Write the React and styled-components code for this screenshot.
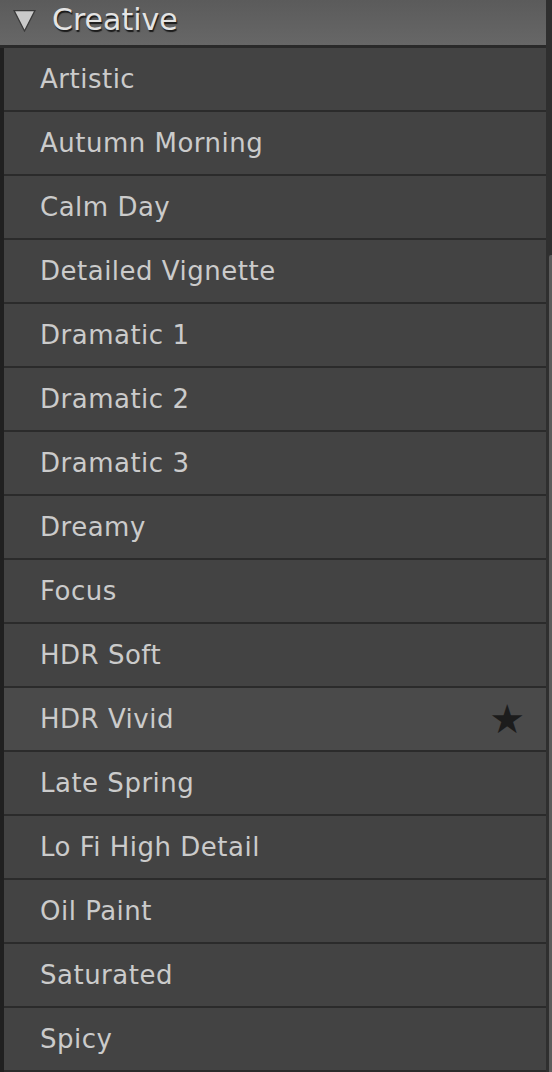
import React from "react";
import styled, { createGlobalStyle } from "styled-components";

const GlobalStyle = createGlobalStyle`
  html, body {
    margin: 0;
    padding: 0;
    background: #2c2c2c;
  }
  body {
    font-family: "DejaVu Sans", "Liberation Sans", sans-serif;
  }
`;

const presets = [
  "Artistic",
  "Autumn Morning",
  "Calm Day",
  "Detailed Vignette",
  "Dramatic 1",
  "Dramatic 2",
  "Dramatic 3",
  "Dreamy",
  "Focus",
  "HDR Soft",
  "HDR Vivid",
  "Late Spring",
  "Lo Fi High Detail",
  "Oil Paint",
  "Saturated",
  "Spicy",
];

const App = () => {
  return (
    <>
      <GlobalStyle />
      <Panel>
        <Content>
          <Header>
            <Caret viewBox="0 0 22 22">
              <path d="M1 1.5 L21 1.5 L11 21 Z" fill="#cacaca" stroke="#3a3a3a" strokeWidth="1.2" />
            </Caret>
            <Title>Creative</Title>
          </Header>
          <List>
            {presets.map((name) => (
              <Row key={name} selected={name === "HDR Vivid"}>
                <Label>{name}</Label>
                {name === "HDR Vivid" && <Star>★</Star>}
              </Row>
            ))}
          </List>
        </Content>
        <Track>
          <Thumb />
        </Track>
      </Panel>
    </>
  );
};

const Panel = styled.div`
  display: flex;
  width: 552px;
  height: 1072px;
  overflow: hidden;
`;

const Content = styled.div`
  flex: 1;
  display: flex;
  flex-direction: column;
`;

const Header = styled.div`
  height: 45px;
  display: flex;
  align-items: center;
  gap: 16px;
  padding-left: 13px;
  background: linear-gradient(#5b5b5b, #676767);
  border-bottom: 3px solid #2a2a2a;
`;

const Caret = styled.svg`
  width: 23px;
  height: 23px;
  margin-top: -4px;
`;

const Title = styled.span`
  font-size: 30px;
  color: #e4e4e4;
  text-shadow: 1px 2px 1px #1a1a1a;
  margin-top: -7px;
`;

const List = styled.div`
  border-left: 4px solid #202020;
  display: flex;
  flex-direction: column;
`;

const Row = styled.div`
  height: 62px;
  display: flex;
  align-items: center;
  justify-content: space-between;
  padding: 0 21px 0 36px;
  background: ${({ selected }) => (selected ? "#4a4a4a" : "#434343")};
  border-bottom: 2px solid #2b2b2b;
`;

const Label = styled.span`
  font-size: 26px;
  letter-spacing: 0.5px;
  color: #cbcbcb;
`;

const Star = styled.span`
  font-size: 40px;
  color: #1c1c1c;
  line-height: 1;
`;

const Track = styled.div`
  width: 6px;
  background: #2f2f2f;
  display: flex;
  flex-direction: column;
  padding-top: 255px;
  align-items: flex-end;
`;

const Thumb = styled.div`
  width: 3px;
  flex: 1;
  background: #5c5c5c;
  border-radius: 2px 0 0 0;
`;

export default App;
